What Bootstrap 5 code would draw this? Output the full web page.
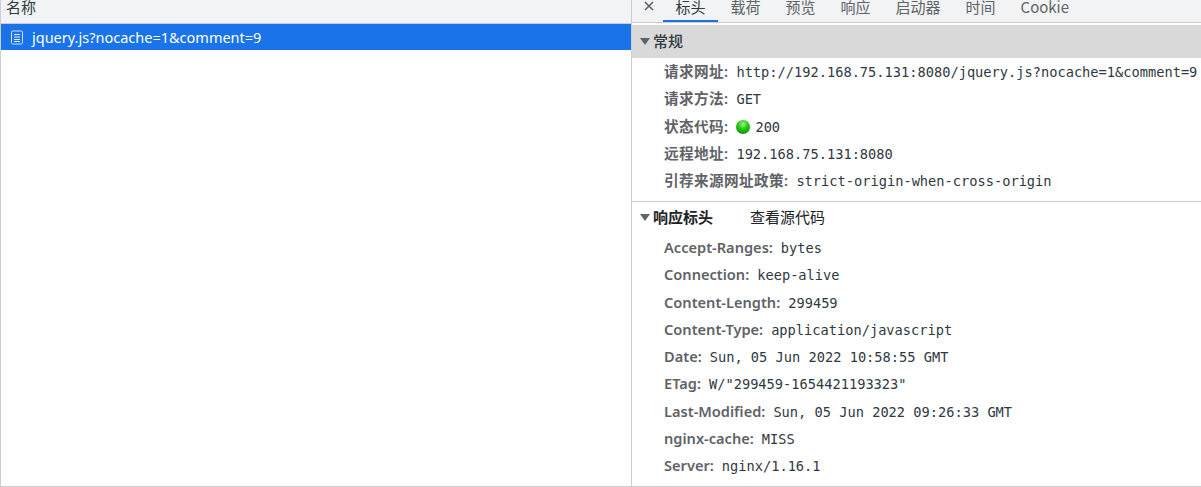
<!DOCTYPE html>
<html lang="zh"><head><meta charset="utf-8"><title>Network</title>
<link href="https://cdn.jsdelivr.net/npm/bootstrap@5.3.0/dist/css/bootstrap.min.css" rel="stylesheet">
<style>
html,body{height:487px;overflow:hidden;background:#fff}
body{font-family:"Noto Sans","Noto Sans CJK SC",sans-serif;font-size:14px;color:#303942}
.shell{height:487px;border-left:1px solid #cbcdd1;border-bottom:1px solid #cbcdd1}
.pane-left{width:631px;flex:none;border-right:1px solid #cbcdd1}
.pane-right{flex:1;min-width:0}
.name-head{height:24px;background:#f1f3f4;border-bottom:1px solid #cbcdd1;padding-left:5px;font-family:"Noto Sans CJK SC",sans-serif;font-size:15px;line-height:14px;color:#303942}
.req-row{height:26px;background:#1a73e8;color:#fff;padding-left:9px;gap:8px;font-size:14.5px;line-height:26px}
.tabbar{height:23px;background:#f1f3f4;border-bottom:1px solid #cbcdd1;overflow:hidden;font-family:"Noto Sans CJK SC",sans-serif;font-size:15px;color:#5f6368;line-height:13px;padding-left:12px}
.tab-x{width:10px;margin-right:9px;line-height:0;padding-top:1px}
.tab-i{padding:0 12.5px;height:22px;position:relative}
.tab-i.is-on{color:#303942}
.tab-i.is-on::after{content:"";position:absolute;left:0;right:0;bottom:0;height:2px;background:#1a73e8}
.sec-head{height:33px;margin-top:2px;background:#d9d9d9;font-family:"Noto Sans CJK SC",sans-serif;font-size:15px;font-weight:500;padding-left:8px;gap:3px;color:#303942}
.tri{width:0;height:0;border-left:5px solid transparent;border-right:5px solid transparent;border-top:7px solid #5f6368;flex:none}
.kv{height:27.3px;padding-left:32px;white-space:nowrap;line-height:27px}
.kv b{font-weight:600;font-size:14.6px;color:#5f6368;font-family:"Noto Sans","Noto Sans CJK SC",sans-serif;margin-right:8px}
.kv b.zh-label{letter-spacing:.4px}
.kv span{font-family:"DejaVu Sans Mono",monospace;font-size:13.68px;color:#303942}
.group-a{height:144px;border-bottom:1px solid #cbcdd1}
.sec-plain{height:32px;padding:0 0 2px 8px;gap:3px;font-family:"Noto Sans CJK SC",sans-serif;font-size:15px;color:#202124}
.sec-plain strong{font-weight:700;margin-right:34px}
.dot{display:inline-block;width:14px;height:14px;border-radius:50%;background:radial-gradient(circle at 50% 30%,#9df08a,#1fc40e 45%,#0a7d05);vertical-align:-2px;margin-right:5px}
</style></head><body>
<div class="shell d-flex">
  <div class="pane-left">
    <div class="name-head">名称</div>
    <div class="req-row d-flex align-items-center">
      <svg width="14" height="15" viewBox="0 0 14 15" fill="none" stroke="#fff" aria-hidden="true"><rect x="1.5" y="1" width="11" height="13" rx="1.2" fill="#1a73e8" stroke="#cfe2fb"/><path d="M4 4.5h6M4 7h6M4 9.5h6M4 11.5h6" stroke="#e6f0fd" stroke-width="1.2"/></svg>
      <span>jquery.js?nocache=1&amp;comment=9</span>
    </div>
  </div>
  <div class="pane-right">
    <div class="tabbar d-flex align-items-start">
      <div class="tab-x"><svg width="10" height="10" viewBox="0 0 10 10" stroke="#5f6368" stroke-width="1.6" aria-hidden="true"><path d="M1 1l8 8M9 1l-8 8"/></svg></div>
      <div class="tab-i is-on">标头</div>
      <div class="tab-i">载荷</div>
      <div class="tab-i">预览</div>
      <div class="tab-i">响应</div>
      <div class="tab-i">启动器</div>
      <div class="tab-i">时间</div>
      <div class="tab-i">Cookie</div>
    </div>
    <div class="sec-head d-flex align-items-center"><i class="tri"></i>常规</div>
    <div class="group-a">
      <div class="kv"><b class="zh-label">请求网址:</b><span>http://192.168.75.131:8080/jquery.js?nocache=1&amp;comment=9</span></div>
      <div class="kv"><b class="zh-label">请求方法:</b><span>GET</span></div>
      <div class="kv"><b class="zh-label">状态代码:</b><i class="dot"></i><span>200</span></div>
      <div class="kv"><b class="zh-label">远程地址:</b><span>192.168.75.131:8080</span></div>
      <div class="kv"><b class="zh-label">引荐来源网址政策:</b><span>strict-origin-when-cross-origin</span></div>
    </div>
    <div class="sec-plain d-flex align-items-center"><i class="tri"></i><strong>响应标头</strong>查看源代码</div>
    <div class="kv"><b>Accept-Ranges:</b><span>bytes</span></div>
    <div class="kv"><b>Connection:</b><span>keep-alive</span></div>
    <div class="kv"><b>Content-Length:</b><span>299459</span></div>
    <div class="kv"><b>Content-Type:</b><span>application/javascript</span></div>
    <div class="kv"><b>Date:</b><span>Sun, 05 Jun 2022 10:58:55 GMT</span></div>
    <div class="kv"><b>ETag:</b><span>W/"299459-1654421193323"</span></div>
    <div class="kv"><b>Last-Modified:</b><span>Sun, 05 Jun 2022 09:26:33 GMT</span></div>
    <div class="kv"><b>nginx-cache:</b><span>MISS</span></div>
    <div class="kv"><b>Server:</b><span>nginx/1.16.1</span></div>
  </div>
</div>
<script src="https://cdn.jsdelivr.net/npm/bootstrap@5.3.0/dist/js/bootstrap.bundle.min.js"></script>
</body></html>
